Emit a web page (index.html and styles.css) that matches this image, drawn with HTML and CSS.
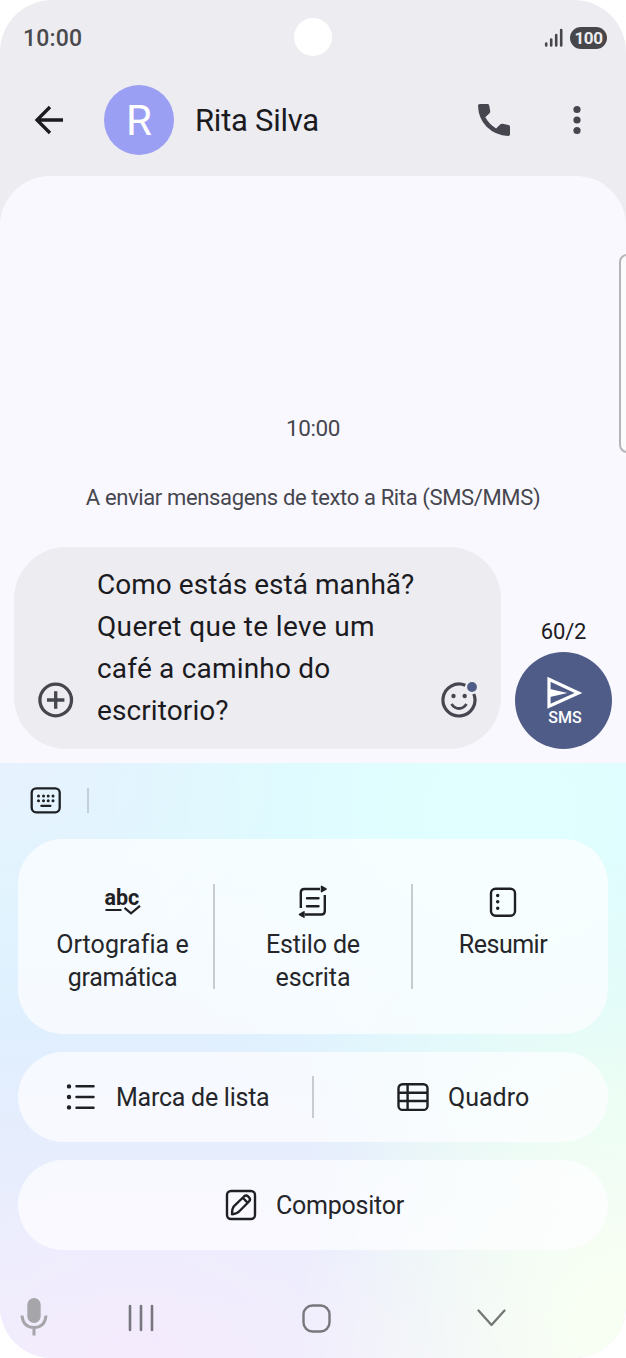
FILE: index.html
```html
<!DOCTYPE html>
<html lang="pt">
<head>
<meta charset="utf-8">
<title>Rita Silva</title>
<link rel="stylesheet" href="styles.css">
</head>
<body>
<div class="screen">
  <div class="status">
    <span class="clock">10:00</span>
    <span class="camera"></span>
    <div class="indicators">
      <svg width="20" height="20" viewBox="0 0 20 20" stroke="#47474b" stroke-width="2.600" stroke-linecap="round"><path d="M2.200 15.500v2M7.200 11.500v6M12.200 7v10.500M17.200 2v15.500"/></svg>
      <span class="battery">100</span>
    </div>
  </div>
  <header class="header">
    <svg class="back" width="30" height="30" viewBox="0 0 30 30" fill="none" stroke="#1b1b1f" stroke-width="3.300"><path d="M29 15H3M16 2 3 15l13 13"/></svg>
    <span class="avatar">R</span>
    <h1 class="name">Rita Silva</h1>
    <svg class="phone" width="32" height="32" viewBox="0 0 32 32" fill="#46464f"><path d="M1.800 0H9.500q1.400 0 1.700 1.400l1 5.500q.3 1.500-.7 2.400L7.300 13.300q4 7 10.800 11.200l4.300-4.200q.9-.9 2.200-.6l5.800 1.200q1.600.3 1.600 1.800v7.500q0 1.800-1.800 1.800Q17.500 31.500 8.600 22.800Q.4 14.500 0 1.800Q0 0 1.800 0z"/></svg>
    <svg class="more" width="8" height="30" viewBox="0 0 8 30" fill="#46464f"><circle cx="4" cy="4.500" r="3.600"/><circle cx="4" cy="15" r="3.600"/><circle cx="4" cy="25.500" r="3.600"/></svg>
  </header>
  <main class="chat">
    <span class="edge-handle"></span>
    <p class="time">10:00</p>
    <p class="notice">A enviar mensagens de texto a Rita (SMS/MMS)</p>
    <div class="compose">
      <div class="bubble">
        <svg width="36" height="36" viewBox="0 0 36 36" fill="none" stroke="#46464f" stroke-width="3.300"><circle cx="17.700" cy="18" r="15.800"/><path d="M17.700 9.300v17.400M9 18h17.400"/></svg>
        <p class="message"><span class="l1">Como estás está manhã?</span><br><span class="l2">Queret que te leve um</span><br><span class="l3">café a caminho do</span><br><span class="l4">escritorio?</span></p>
        <svg class="emoji" width="38" height="36" viewBox="0 0 38 36" fill="none" stroke="#46464f" stroke-width="3.200"><path d="M24.300 3.300A16 16 0 1 0 32.800 12"/><path d="M10.500 22q3 4.500 7.500 4.500t7.500-4.500" stroke-width="2.800"/><circle cx="12.500" cy="14" r="2.200" fill="#46464f" stroke="none"/><circle cx="23.700" cy="14" r="2.200" fill="#46464f" stroke="none"/><circle cx="31" cy="5" r="4.900" fill="#4f5c87" stroke="none"/></svg>
      </div>
      <div class="send-column">
        <span class="count">60/2</span>
        <div class="send">
          <svg width="36" height="33" viewBox="0 0 36 33" fill="none" stroke="#fff" stroke-width="3.200"><path d="M2 3.300v27L31.500 17z"/><path d="M3 13l17.500 4L3 21z" fill="#fff" stroke="none"/></svg>
          <span class="sms">SMS</span>
        </div>
      </div>
    </div>
  </main>
  <section class="panel">
    <div class="toolbar">
      <svg width="31" height="27" viewBox="0 0 31 27" fill="none" stroke="#1e2024" stroke-width="2.300" stroke-linecap="round"><rect x="1.700" y="1.300" width="28" height="24" rx="4.500"/><path d="M11.300 18.800h9.200" stroke-width="2.200"/><path d="M8.500 9h.01M13.500 9h.01M18.200 9h.01M23 9h.01M8.500 13.700h.01M13.500 13.700h.01M18.200 13.700h.01M23 13.700h.01" stroke-width="3"/></svg>
      <span class="toolbar-line"></span>
    </div>
    <div class="cards">
      <div class="card card-tall">
        <div class="tool tool-a">
          <div class="spell"><span>abc</span><svg width="36" height="11" viewBox="0 0 36 11" fill="none" stroke="#1e2024" stroke-width="2.200"><path d="M.5 5h16M19.500 2.800l6.500 5.600L35 .8"/></svg></div>
          <p><span class="t1">Ortografia e</span><br><span class="t2">gramática</span></p>
        </div>
        <span class="divider tall"></span>
        <div class="tool tool-b">
          <svg width="30" height="34" viewBox="0 0 30 34" fill="none" stroke="#1e2024" stroke-width="2.400"><path d="M2.800 24V8.500Q2.800 5 6.300 5H22M26.800 11v16Q26.800 30.500 23.300 30.500H7"/><path d="M9 14.200h11.500M9 22.200h11.500" stroke-linecap="round"/><path d="M23.500 2.300 28 5l-4.500 2.700zM6 27.800 1.500 30.500 6 33.200z" fill="#1e2024" stroke-width="1.500" stroke-linejoin="round"/></svg>
          <p><span class="t3">Estilo de</span><br><span class="t4">escrita</span></p>
        </div>
        <span class="divider tall"></span>
        <div class="tool tool-c">
          <svg width="28" height="34" viewBox="0 0 28 34" fill="none" stroke="#1e2024" stroke-width="2.400" stroke-linecap="round"><rect x="2" y="4.700" width="24" height="27" rx="4.500"/><path d="M8.700 11.500h.01M8.700 17.800h.01M8.700 24.200h.01" stroke-width="3.500"/></svg>
          <p><span class="t5">Resumir</span></p>
        </div>
      </div>
      <div class="card card-row">
        <div class="item item-list">
          <svg width="29" height="28" viewBox="0 0 29 28" fill="none" stroke="#1e2024" stroke-width="2.500" stroke-linecap="round"><path d="M10.500 3.200h17M10.500 14h17M10.500 24.800h17"/><path d="M3 3.400h.01M3 14h.01M3 24.400h.01" stroke-width="4.400"/></svg>
          <span class="t6">Marca de lista</span>
        </div>
        <span class="divider short"></span>
        <div class="item item-table">
          <svg width="32" height="28" viewBox="0 0 32 28" fill="none" stroke="#1e2024" stroke-width="2.400"><rect x="1.500" y="1.300" width="29" height="25.600" rx="4"/><path d="M10.600 1v26M2 9.800h28M2 18h28"/></svg>
          <span class="t7">Quadro</span>
        </div>
      </div>
      <div class="card card-row item-compose">
        <svg width="32" height="32" viewBox="0 0 32 32" fill="none" stroke="#1e2024" stroke-width="2.400" stroke-linejoin="round"><rect x="2" y="2" width="28" height="28" rx="4"/><path d="M7 25.200Q7 19 9.300 16.800L19 7.500Q21 5.700 23.200 7.500l.8.800q2 2.200 0 4.200L14.600 22Q12 24.800 7 25.200zM18 9l4.800 4.800"/></svg>
        <span class="t8">Compositor</span>
      </div>
    </div>
    <nav class="nav">
      <svg class="mic" width="28" height="38" viewBox="0 0 28 38" fill="none" stroke="#a6a5aa" stroke-width="3"><rect x="7.300" y="0" width="13.400" height="25" rx="6.700" fill="#a6a5aa" stroke="none"/><path d="M2 17.500q1 12 12 12t12-12M14 30v7.500"/></svg>
      <svg class="recents" width="26" height="28" viewBox="0 0 26 28" stroke="#77767f" stroke-width="2.600" stroke-linecap="round"><path d="M2 2v24M13 2v24M24 2v24"/></svg>
      <svg class="home" width="29" height="29" viewBox="0 0 29 29" fill="none" stroke="#77777c" stroke-width="2.400"><rect x="1.500" y="1.500" width="26" height="26" rx="9"/></svg>
      <svg class="down" width="29" height="18" viewBox="0 0 29 18" fill="none" stroke="#747775" stroke-width="2.300" stroke-linecap="round" stroke-linejoin="round"><path d="M1.500 1.500l13 14.500 13-14.500"/></svg>
    </nav>
  </section>
</div>
</body>
</html>
```

FILE: styles.css
```css
* { box-sizing: border-box; }
body { margin: 0; background: #fff; font-family: Roboto, "Open Sans", sans-serif; color: #1b1b1f; }
p, h1 { margin: 0; }
svg { display: block; flex: none; }
.screen { width: 626px; height: 1358px; border-radius: 52px; overflow: hidden; background: #edecf1; display: flex; flex-direction: column; }

.status { height: 76px; padding: 0 19px 0 23px; display: grid; grid-template-columns: 1fr 38px 1fr; align-items: center; }
.clock { font-size: 23px; font-weight: 500; color: #4a4a4e; letter-spacing: .2px; }
.camera { width: 38px; height: 38px; margin-left: -2px; margin-top: -3px; border-radius: 50%; background: #fff; }
.indicators { display: flex; justify-content: flex-end; align-items: center; gap: 6px; }
.battery { width: 37px; height: 22px; border-radius: 11px; background: #47474b; color: #edecf1; font-size: 17px; font-weight: 700; line-height: 22px; text-align: center; letter-spacing: -.4px; }

.header { height: 100px; padding: 0 45px 12px 34px; display: flex; align-items: center; }
.avatar { width: 70px; height: 70px; margin-left: 40px; border-radius: 50%; background: #9b9ff3; color: #fff; font-size: 42px; line-height: 71px; text-align: center; }
.name { margin-left: 21px; padding-top: 2px; font-size: 31px; font-weight: 400; line-height: 40px; letter-spacing: -.25px; }
.phone { margin-left: auto; }
.more { margin-left: 63px; }

.chat { position: relative; height: 587px; border-radius: 50px 50px 0 0; background: #f9f8fe; display: flex; flex-direction: column; }
.edge-handle { position: absolute; top: 78px; right: -12px; width: 19.500px; height: 199px; border: 2px solid #b5b5b8; border-radius: 8px; background: #fbfafd; }
.time { margin-top: 237px; height: 30px; font-size: 22.500px; line-height: 30px; letter-spacing: -.4px; text-align: center; color: #46464f; }
.notice { margin-top: 40px; font-size: 22px; line-height: 30px; letter-spacing: -.36px; text-align: center; color: #46464f; white-space: nowrap; }
.compose { display: flex; gap: 14px; margin: 34px 14px 0; height: 202px; }
.bubble { width: 487px; padding: 17px 21px 0 24px; border-radius: 52px; background: #edecf1; display: flex; align-items: flex-end; }
.bubble > svg { margin-bottom: 31px; }
.message { width: 344px; height: 185px; margin-left: 23px; font-size: 28px; line-height: 42px; white-space: nowrap; }
.l1 { letter-spacing: .04px; }
.l2 { letter-spacing: .35px; }
.l3 { letter-spacing: .2px; }
.l4 { letter-spacing: .1px; }
.send-column { width: 97px; display: flex; flex-direction: column; align-items: center; justify-content: flex-end; }
.count { font-size: 22px; line-height: 28px; margin-bottom: 6px; letter-spacing: -.2px; }
.send { width: 97px; height: 97px; border-radius: 50%; background: #4f5c87; color: #fff; display: flex; flex-direction: column; align-items: center; padding: 24px 0 0 3px; }
.sms { font-size: 16px; font-weight: 500; line-height: 18px; }

.panel {
  height: 595px;
  background:
    radial-gradient(ellipse 330px 330px at 100% 95%, #f8fff3 15%, rgba(248,255,243,0) 100%),
    radial-gradient(ellipse 280px 200px at 22% 100%, #f4ebfd 0%, rgba(244,235,253,0) 100%),
    radial-gradient(ellipse 330px 260px at 100% 58%, #e6fff5 0%, rgba(230,255,245,0) 100%),
    radial-gradient(ellipse 400px 360px at 80% 8%, #e1ffff 15%, rgba(225,255,255,0) 100%),
    radial-gradient(ellipse 280px 220px at 0% 0%, #e7f2fe 0%, rgba(231,242,254,0) 100%),
    linear-gradient(#def6fe 15%, #e0effe 45%, #e6edfd 63%, #f0effd 100%);
}
.toolbar { height: 76px; padding: 0 30px 1px; display: flex; align-items: center; gap: 26px; }
.toolbar-line { width: 2px; height: 25px; background: #c4ced5; }
.cards { padding: 0 18px; display: flex; flex-direction: column; gap: 18px; }
.card { border-radius: 45px; background: rgba(254,253,255,.72); display: flex; font-size: 25px; color: #252629; white-space: nowrap; }
.card-tall { height: 195px; padding-top: 45px; }
.tool { display: flex; flex-direction: column; align-items: center; text-align: center; line-height: 32.700px; }
.tool p { margin-top: 11px; }
.tool-a { width: 195px; padding-left: 14px; }
.tool-b { width: 196px; }
.tool-c { width: 180px; }
.t1 { letter-spacing: .05px; }
.t2 { letter-spacing: -.3px; }
.t3 { letter-spacing: -.15px; }
.t4 { letter-spacing: -.1px; }
.t5 { letter-spacing: -.5px; }
.t6 { letter-spacing: -.25px; }
.t8 { letter-spacing: -.25px; }
.spell { width: 36px; height: 34px; padding-top: 7px; font-size: 21.500px; font-weight: 700; line-height: 14px; color: #1e2024; }
.spell span { display: block; text-align: left; }
.divider { width: 2px; background: #c6cccf; }
.tall { height: 105px; }
.short { height: 42px; }
.card-row { height: 90px; align-items: center; }
.item { display: flex; align-items: center; }
.item-list { width: 294px; padding-left: 48px; gap: 21px; }
.item-table { padding-left: 83px; gap: 19px; }
.item-compose { padding-left: 207px; gap: 19px; }

.nav { height: 108px; padding: 28px 0 0 20px; display: flex; align-items: center; }
.mic { margin-top: -3px; }
.recents { margin-left: 80px; }
.home { margin-left: 148px; }
.down { margin-left: 146px; }
```
